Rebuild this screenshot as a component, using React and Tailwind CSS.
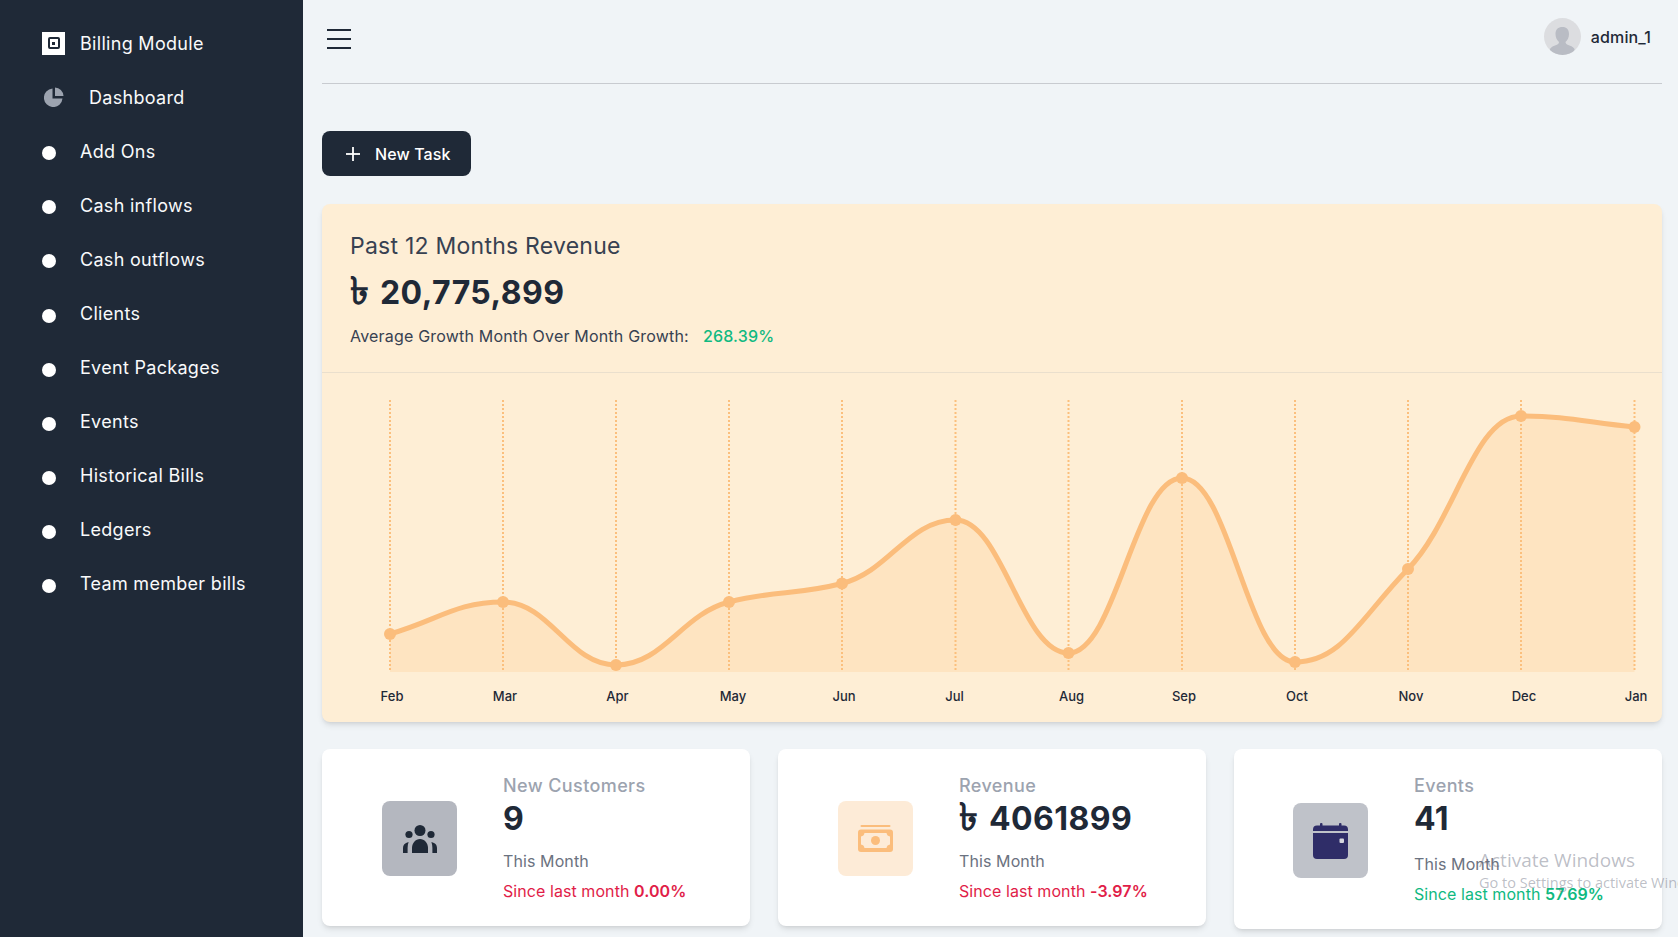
const NAV = ["Add Ons", "Cash inflows", "Cash outflows", "Clients", "Event Packages", "Events", "Historical Bills", "Ledgers", "Team member bills"];

// chart values in svg coordinates
const POINTS = [
  { m: "Feb", x: 68, y: 261, lx: 70 },
  { m: "Mar", x: 181, y: 229, lx: 183 },
  { m: "Apr", x: 294, y: 292, lx: 295.5 },
  { m: "May", x: 407, y: 229, lx: 411 },
  { m: "Jun", x: 520, y: 210.5, lx: 522 },
  { m: "Jul", x: 633.5, y: 147, lx: 632.5 },
  { m: "Aug", x: 746.5, y: 280, lx: 749.5 },
  { m: "Sep", x: 860, y: 105, lx: 862 },
  { m: "Oct", x: 973, y: 289, lx: 975 },
  { m: "Nov", x: 1086, y: 196, lx: 1089 },
  { m: "Dec", x: 1199, y: 43, lx: 1202 },
  { m: "Jan", x: 1312.5, y: 54, lx: 1314 },
];
const BASE_Y = 299;

// monotone cubic through the points, same idea as d3 curveMonotoneX
function monotonePath(pts) {
  const n = pts.length;
  const d = [];
  for (let i = 0; i < n - 1; i++) d.push((pts[i + 1].y - pts[i].y) / (pts[i + 1].x - pts[i].x));
  const t = [d[0]];
  for (let i = 1; i < n - 1; i++) {
    if (d[i - 1] * d[i] <= 0) t.push(0);
    else t.push((2 * d[i - 1] * d[i]) / (d[i - 1] + d[i]));
  }
  t.push(d[n - 2]);
  let out = `M${pts[0].x} ${pts[0].y}`;
  for (let i = 0; i < n - 1; i++) {
    const h = (pts[i + 1].x - pts[i].x) / 2.4;
    out += ` C${pts[i].x + h} ${pts[i].y + t[i] * h} ${pts[i + 1].x - h} ${pts[i + 1].y - t[i + 1] * h} ${pts[i + 1].x} ${pts[i + 1].y}`;
  }
  return out;
}

function RevenueChart() {
  const line = monotonePath(POINTS);
  const area = `${line} L${POINTS[11].x} ${BASE_Y} L${POINTS[0].x} ${BASE_Y} Z`;
  return (
    <svg width="1340" height="349" viewBox="0 0 1340 349" className="block">
      <path d={area} fill="#fee4c1" />
      {POINTS.map((p) => (
        <line key={p.m} x1={p.x} x2={p.x} y1="27" y2={BASE_Y} stroke="#fbbf7d" strokeWidth="2" strokeDasharray="2 2" />
      ))}
      <path d={line} fill="none" stroke="#fbbd7c" strokeWidth="5" strokeLinecap="round" />
      {POINTS.map((p) => (
        <circle key={p.m} cx={p.x} cy={p.y} r="6" fill="#fbbd7c" />
      ))}
      {POINTS.map((p) => (
        <text key={p.m} x={p.lx} y="328" textAnchor="middle" fontSize="13" fontWeight="500" fill="#1f2937">
          {p.m}
        </text>
      ))}
    </svg>
  );
}

function GroupIcon() {
  return (
    <svg width="34" height="28" viewBox="0 0 34 28" fill="#1f2937">
      <circle cx="17" cy="5.5" r="5.5" />
      <circle cx="6" cy="9.5" r="3.6" />
      <circle cx="28" cy="9.5" r="3.6" />
      <path d="M9 28v-5c0-5 3.5-9 8-9s8 4 8 9v5z" />
      <path d="M0 28v-5c0-3 1.6-5 5.6-6-.6 1.800-1 3.800-1 6v5z" />
      <path d="M34 28v-5c0-3-1.600-5-5.600-6 .6 1.800 1 3.800 1 6v5z" />
    </svg>
  );
}

function MoneyIcon() {
  return (
    <svg width="35" height="27" viewBox="0 0 35 27">
      <rect x="2.500" y="0" width="30" height="2" rx="1" fill="#fbbd7c" />
      <rect x="0" y="4.500" width="35" height="22.500" rx="3" fill="#fbbd7c" />
      <path d="M6.500 8H28.500C28.800 10 30 11.200 32 11.500V19.500C30 19.800 28.800 21 28.500 23H6.500C6.200 21 5 19.800 3 19.500V11.500C5 11.200 6.200 10 6.500 8Z" fill="#fdebd7" />
      <circle cx="17.500" cy="15.500" r="4.500" fill="#fbbd7c" />
    </svg>
  );
}

function CalendarIcon() {
  return (
    <svg width="35" height="36" viewBox="0 0 35 36">
      <rect x="7" y="0" width="2.500" height="5" rx="1" fill="#2f2d68" />
      <rect x="26" y="0" width="2.500" height="5" rx="1" fill="#2f2d68" />
      <path d="M4 2.500H31a4 4 0 0 1 4 4V8H0V6.500a4 4 0 0 1 4-4z" fill="#2f2d68" />
      <path d="M0 10H35V32a4 4 0 0 1-4 4H4a4 4 0 0 1-4-4z" fill="#2f2d68" />
      <rect x="26.500" y="15.500" width="4.500" height="4.500" rx="1" fill="#d5d6de" />
    </svg>
  );
}

function Taka() {
  return <span className="inline-block w-[30px] text-[38px] leading-[30px] tracking-normal">৳</span>;
}

function StatCard({ title, value, taka, pct, up, iconBg, icon, tall }) {
  const tone = up ? "text-[#10b981]" : "text-[#e11d48]";
  return (
    <div className={`bg-white rounded-lg shadow-md flex pb-[23px] pt-[23px] gap-[46px] items-start ${tall ? "pl-[59px]" : "pl-[60px]"}`}>
      <div className={`w-[75px] h-[75px] rounded-lg flex items-center justify-center shrink-0 ${iconBg} ${tall ? "mt-[31px]" : "mt-[29px]"}`}>
        {icon}
      </div>
      <div>
        <div className="text-[18px] leading-7 font-medium tracking-[0.4px] text-[#9ca3af]">{title}</div>
        <div className="-mt-[1px] text-[32px] leading-10 font-bold tracking-[0.43px] text-[#1f2937]">
          {taka && <Taka />}
          {value}
        </div>
        <div className={`text-base tracking-[0.1px] text-[#6b7280] ${tall ? "mt-[13px]" : "mt-[10px]"}`}>This Month</div>
        <div className={`text-base tracking-[0.07px] ${tone} mt-[6px]`}>
          Since last month <span className="font-semibold">{pct}</span>
        </div>
      </div>
    </div>
  );
}

export default function App() {
  return (
    <div className="relative flex h-[937px] w-[1678px] overflow-hidden bg-[#f0f4f7] font-['Inter',sans-serif]">
      {/* Sidebar */}
      <aside className="w-[303px] shrink-0 bg-[#1f2937] pt-[16px] text-[18px] tracking-[0.3px] text-[#f9fafb]">
        <div className="flex h-[54.1px] items-center pl-[42px]">
          <div className="flex h-[23px] w-[23px] items-center justify-center bg-white">
            <div className="flex h-[12px] w-[12px] items-center justify-center rounded-[2px] border-[2.5px] border-[#1f2937]">
              <div className="h-[3px] w-[3px] bg-[#1f2937]" />
            </div>
          </div>
          <span className="ml-[15px]">Billing Module</span>
        </div>
        <div className="flex h-[54.1px] items-center pl-[44px]">
          <svg width="20" height="20" viewBox="0 0 20 20" fill="#9ca3af">
            <path d="M8.500 1.500V11.500H18.500A9.300 9.300 0 1 1 8.500 1.500Z" />
            <path d="M11 0.500A9 9 0 0 1 19.500 9H11Z" />
          </svg>
          <span className="ml-[25px]">Dashboard</span>
        </div>
        {NAV.map((item) => (
          <div key={item} className="flex h-[54.1px] items-center pl-[42px]">
            <span className="mt-[4px] h-[14px] w-[14px] rounded-full bg-white" />
            <span className="ml-[24px]">{item}</span>
          </div>
        ))}
      </aside>

      {/* Main */}
      <main className="flex-1 pl-[19px] pr-[16px]">
        <header className="flex h-[84px] items-center justify-between border-b border-[#c8cbd0] pb-[8px]">
          <svg width="24" height="20" viewBox="0 0 24 20" className="ml-[5px] mt-[2px]" stroke="#1f2937" strokeWidth="2">
            <line x1="0" y1="1" x2="24" y2="1" />
            <line x1="0" y1="10" x2="24" y2="10" />
            <line x1="0" y1="19" x2="24" y2="19" />
          </svg>
          <div className="-mt-[2px] flex items-center gap-[10px] pr-[11px]">
            <svg width="37" height="37" viewBox="0 0 37 37" className="rounded-full">
              <rect width="37" height="37" fill="#dcdde0" />
              <path d="M18.500 9c4 0 6.500 2.500 6.500 7 0 3.500-1.500 6.500-3.500 8 0 1.500 1 2.500 4 3.500 3 1 4.500 2.500 5 3.500V37H6v-6c.5-1 2-2.500 5-3.500 3-1 4-2 4-3.500-2-1.500-3.500-4.500-3.500-8 0-4.500 2.500-7 7-7z" fill="#b9bcc4" />
            </svg>
            <span className="text-base font-medium tracking-[0.15px] text-[#1f2937]">admin_1</span>
          </div>
        </header>

        <button className="mt-[47px] flex h-[45px] w-[149px] items-center rounded-lg bg-[#1f2937] pl-[24px] text-base font-medium tracking-[0.1px] text-white">
          <svg width="14" height="14" viewBox="0 0 14 14" stroke="#fff" strokeWidth="1.800">
            <line x1="7" y1="0" x2="7" y2="14" />
            <line x1="0" y1="7" x2="14" y2="7" />
          </svg>
          <span className="ml-[15px]">New Task</span>
        </button>

        {/* Revenue card */}
        <section className="mt-[28px] rounded-lg bg-[#feeed5] shadow-md">
          <div className="h-[169px] border-b border-[#eadfcd] pl-[28px] pt-[26px]">
            <div className="text-[23px] leading-8 tracking-[0.24px] text-[#374151]">Past 12 Months Revenue</div>
            <div className="mt-[11px] text-[32px] leading-10 font-bold tracking-[0.43px] text-[#1f2937]">
              <Taka />
              20,775,899
            </div>
            <div className="mt-[11px] flex text-base tracking-[0.19px] text-[#374151]">
              Average Growth Month Over Month Growth:
              <span className="ml-[14px] font-medium text-[#10b981]">268.39%</span>
            </div>
          </div>
          <RevenueChart />
        </section>

        {/* Stats */}
        <div className="mt-[27px] grid grid-cols-3 items-start gap-[28px]">
          <StatCard title="New Customers" value="9" pct="0.00%" iconBg="bg-[#b4b7bf]" icon={<GroupIcon />} />
          <StatCard title="Revenue" taka value="4061899" pct="-3.97%" iconBg="bg-[#fdebd7]" icon={<MoneyIcon />} />
          <StatCard title="Events" value="41" pct="57.69%" up tall iconBg="bg-[#bfc2c9]" icon={<CalendarIcon />} />
        </div>
      </main>

      {/* Windows watermark */}
      <div className="pointer-events-none absolute left-[1479px] top-[847px] whitespace-nowrap font-['Open_Sans',sans-serif] text-[#6b7080]/45">
        <div className="text-[19px] leading-[26px]">Activate Windows</div>
        <div className="text-[14.500px] leading-5">Go to Settings to activate Windows.</div>
      </div>
    </div>
  );
}
